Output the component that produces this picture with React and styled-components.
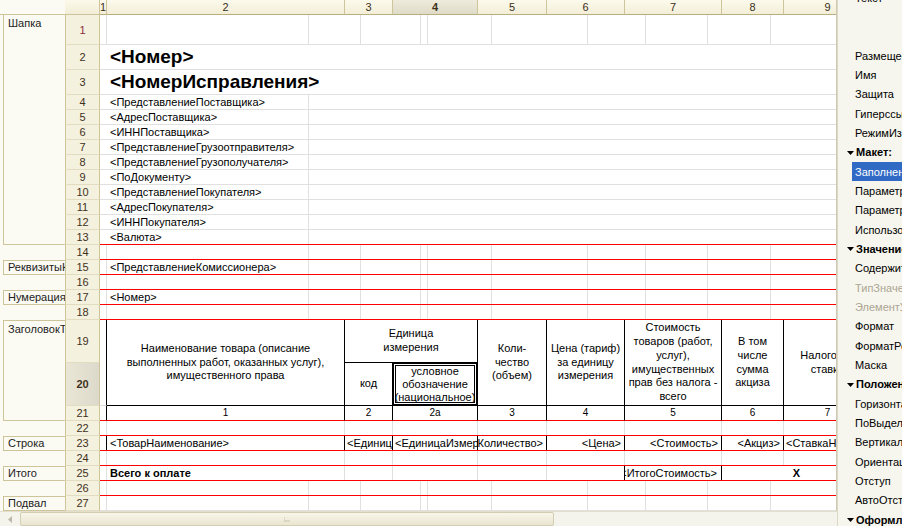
import React from 'react'
import styled, { createGlobalStyle } from 'styled-components'

const GlobalStyle = createGlobalStyle`
  html, body { margin: 0; padding: 0; background: #fff; }
  body { font-family: "Liberation Sans", Arial, sans-serif; font-size: 11px; color: #000; }
  * { box-sizing: border-box; }
`

const FORMAT_A = '7px 202px 52px 60px 7px 64px 96px 58px 62px 63px 80px'
const FORMAT_B = '7px 238px 48px 85px 69px 78px 97px 62px 88px'
const GRID = '#e0e0e0'
const RED = '#ff0000'
const KHAKI = '#cdc499'

const edgeColor = (edge) => (edge === 'black' ? '#000' : edge === 'none' ? 'transparent' : GRID)

const Screen = styled.div`
    width: 902px;
    height: 526px;
    display: flex;
    overflow: hidden;
`
const Workspace = styled.div`
    width: 837px;
    display: grid;
    grid-template-rows: 511px 15px;
`
const Main = styled.div`
    display: flex;
    overflow: hidden;
`
const GroupPanel = styled.div`
    width: 65px;
    flex-shrink: 0;
    display: flex;
    flex-direction: column;
    background: #fcfbf3;
`
const Corner = styled.div`
    height: 15px;
    flex-shrink: 0;
    background: ${p => p.$head ? 'linear-gradient(#fbf9ea, #f1edd6)' : 'transparent'};
    border-bottom: 1px solid ${KHAKI};
    border-right: ${p => p.$head ? `1px solid ${KHAKI}` : 'none'};
`
const GroupBox = styled.div`
    height: ${p => p.$h}px;
    margin-left: 3px;
    border: 1px solid ${KHAKI};
    border-right: none;
    border-top: ${p => p.$first ? 'none' : `1px solid ${KHAKI}`};
    padding: ${p => p.$h > 20 ? '2px 0 0 4px' : '0 0 0 4px'};
    line-height: 13px;
    white-space: nowrap;
    overflow: hidden;
    color: #222;
`
const GroupGap = styled.div`
    height: ${p => p.$h}px;
`
const RowHeads = styled.div`
    width: 35px;
    flex-shrink: 0;
    display: flex;
    flex-direction: column;
`
const RowHead = styled.div`
    height: ${p => p.$h}px;
    flex-shrink: 0;
    display: flex;
    align-items: center;
    justify-content: center;
    background: ${p => p.$selected ? 'linear-gradient(90deg, #e9e6d6, #dedacb)' : '#f4f1df'};
    border-bottom: 1px solid #e2dcc0;
    border-right: 1px solid ${KHAKI};
    border-left: 1px solid ${KHAKI};
    color: ${p => p.$first ? '#8a2d3c' : '#3f321c'};
    font-weight: ${p => p.$selected ? 'bold' : 'normal'};
`
const Sheet = styled.div`
    flex: 1;
    overflow: hidden;
    display: flex;
    flex-direction: column;
    border-right: 1px solid #cfcab4;
`
const ColHeads = styled.div`
    width: 772px;
    height: 15px;
    flex-shrink: 0;
    display: grid;
    grid-template-columns: ${FORMAT_B};
`
const ColHead = styled.div`
    display: flex;
    align-items: center;
    justify-content: center;
    background: ${p => p.$selected ? 'linear-gradient(#eeebdc, #dfdbc8)' : 'linear-gradient(#fcfaec, #f2eed7)'};
    border-right: 1px solid ${KHAKI};
    border-bottom: 1px solid #b9ae80;
    color: #3b3020;
    font-weight: ${p => p.$selected ? 'bold' : 'normal'};
    overflow: hidden;
`
const Row = styled.div`
    width: 772px;
    height: ${p => p.$h}px;
    flex-shrink: 0;
    display: grid;
    grid-template-columns: ${p => p.$cols};
    border-bottom: 1px solid ${p => p.$red ? RED : GRID};
`
const Cell = styled.div`
    grid-column: span ${p => p.$span || 1};
    display: flex;
    align-items: center;
    justify-content: ${p => p.$align === 'right' ? 'flex-end' : p.$align === 'center' ? 'center' : 'flex-start'};
    padding: 0 ${p => p.$pad ?? 3}px;
    border-right: 1px solid ${p => edgeColor(p.$edge)};
    white-space: nowrap;
    overflow: hidden;
    font-size: ${p => p.$size || 11}px;
    font-weight: ${p => p.$bold ? 'bold' : 'normal'};
`
const TableHead = styled.div`
    width: 772px;
    flex-shrink: 0;
    display: grid;
    grid-template-columns: ${FORMAT_B};
    grid-template-rows: 43px 43px 15px;
`
const HeadCell = styled.div`
    grid-column: ${p => p.$col};
    grid-row: ${p => p.$row};
    display: flex;
    align-items: center;
    justify-content: center;
    text-align: center;
    line-height: ${p => p.$current ? 13 : 13.7}px;
    white-space: nowrap;
    overflow: hidden;
    border-right: 1px solid ${p => edgeColor(p.$edge)};
    border-bottom: 1px solid ${p => p.$bottom || '#000'};
    box-shadow: ${p => p.$current ? 'inset 0 0 0 1px #000, inset 0 0 0 2px #fff, inset 0 0 0 3px #000' : 'none'};
    font-size: ${p => p.$size || 11}px;
`
const HScroll = styled.div`
    display: flex;
    background: #f5f4ec;
    border-top: 1px solid #e3dfcc;
`
const ScrollBtn = styled.div`
    width: 20px;
    display: flex;
    align-items: center;
    justify-content: center;
`
const Thumb = styled.div`
    width: 534px;
    display: flex;
    align-items: center;
    justify-content: center;
    border: 1px solid #d3cdb2;
    border-radius: 2px;
    background: linear-gradient(#f8f6ea, #e9e5d0);
`
const PropsPanel = styled.div`
    width: 65px;
    flex-shrink: 0;
    background: #f7f6ee;
    border-left: 1px solid #dcd8c6;
    overflow: hidden;
`
const PropsList = styled.div`
    margin-top: -12px;
`
const PropItem = styled.div`
    height: 19.33px;
    display: flex;
    align-items: center;
    white-space: nowrap;
    overflow: hidden;
    margin-left: ${p => p.$active ? 14 : 0}px;
    padding-left: ${p => p.$active ? 3 : 17}px;
    background: ${p => p.$active ? '#316ac5' : 'transparent'};
    color: ${p => p.$active ? '#fff' : p.$muted ? '#aaa593' : '#000'};
`
const PropGroup = styled.div`
    height: 19.33px;
    display: flex;
    align-items: center;
    gap: 2px;
    padding-left: 9px;
    white-space: nowrap;
    overflow: hidden;
    font-weight: bold;
    svg { flex-shrink: 0; }
`

const ROW_HEIGHTS = [30, 25, 25, ...Array(15).fill(15), 43, 43, ...Array(7).fill(15)]

const GROUPS = [
    { label: 'Шапка', h: 230, first: true },
    { gap: 15 },
    { label: 'РеквизитыКомиссионера', h: 15 },
    { gap: 15 },
    { label: 'НумерацияЛистов', h: 15 },
    { gap: 15 },
    { label: 'ЗаголовокТаблицы', h: 101 },
    { gap: 15 },
    { label: 'Строка', h: 15 },
    { gap: 15 },
    { label: 'Итого', h: 15 },
    { gap: 15 },
    { label: 'Подвал', h: 15 },
]

const HEADER_TEXTS = [
    '<ПредставлениеПоставщика>',
    '<АдресПоставщика>',
    '<ИННПоставщика>',
    '<ПредставлениеГрузоотправителя>',
    '<ПредставлениеГрузополучателя>',
    '<ПоДокументу>',
    '<ПредставлениеПокупателя>',
    '<АдресПокупателя>',
    '<ИННПокупателя>',
    '<Валюта>',
]

const PROPS = [
    { t: 'Текст' }, { t: '' }, { t: '' },
    { t: 'Размещение' }, { t: 'Имя' }, { t: 'Защита' }, { t: 'Гиперссылка' }, { t: 'РежимИзменения' },
    { g: 'Макет:' },
    { t: 'Заполнение', active: true }, { t: 'Параметр' }, { t: 'ПараметрРасшифровки' }, { t: 'Использование' },
    { g: 'Значение:' },
    { t: 'Содержит значение' }, { t: 'ТипЗначения', muted: true }, { t: 'ЭлементУправления', muted: true },
    { t: 'Формат' }, { t: 'ФорматРедактирования' }, { t: 'Маска' },
    { g: 'Положение:' },
    { t: 'Горизонтальное положение' }, { t: 'ПоВыделенным' }, { t: 'Вертикальное положение' },
    { t: 'Ориентация текста' }, { t: 'Отступ' }, { t: 'АвтоОтступ' },
    { g: 'Оформление:' },
]

const GridRow = ({ h = 15, red, text }) => (
    <Row $h={h} $cols={FORMAT_A} $red={red}>
        <Cell />
        <Cell>{text}</Cell>
        {Array.from({ length: 9 }, (_, i) => <Cell key={i} />)}
    </Row>
)

const TextRow = ({ text, red }) => (
    <Row $h={15} $cols={FORMAT_A} $red={red}>
        <Cell $edge="none" />
        <Cell>{text}</Cell>
        <Cell $span={9} $edge="none" />
    </Row>
)

const TitleRow = ({ text }) => (
    <Row $h={25} $cols={FORMAT_A}>
        <Cell $edge="none" />
        <Cell $span={10} $edge="none" $bold $size={19}>{text}</Cell>
    </Row>
)

const Arrow = ({ dir = 'down', color = '#000' }) => (
    <svg width="7" height="7" viewBox="0 0 7 7">
        {dir === 'down'
            ? <path d="M0 2h7L3.5 6z" fill={color} />
            : <path d="M5 0v7L1 3.5z" fill={color} />}
    </svg>
)

export default function App() {
    return (
        <Screen>
            <GlobalStyle />
            <Workspace>
                <Main>
                    <GroupPanel>
                        <Corner />
                        {GROUPS.map((g, i) => g.gap
                            ? <GroupGap key={i} $h={g.gap} />
                            : <GroupBox key={i} $h={g.h} $first={g.first}>{g.label}</GroupBox>)}
                    </GroupPanel>
                    <RowHeads>
                        <Corner $head />
                        {ROW_HEIGHTS.map((h, i) => (
                            <RowHead key={i} $h={h} $first={i === 0} $selected={i === 19}>{i + 1}</RowHead>
                        ))}
                    </RowHeads>
                    <Sheet>
                        <ColHeads>
                            {[1, 2, 3, 4, 5, 6, 7, 8, 9].map(n => (
                                <ColHead key={n} $selected={n === 4}>{n}</ColHead>
                            ))}
                        </ColHeads>
                        <GridRow h={30} />
                        <TitleRow text="<Номер>" />
                        <TitleRow text="<НомерИсправления>" />
                        {HEADER_TEXTS.map((t, i) => (
                            <TextRow key={t} text={t} red={i === HEADER_TEXTS.length - 1} />
                        ))}
                        <GridRow red />
                        <GridRow red text="<ПредставлениеКомиссионера>" />
                        <GridRow red />
                        <GridRow red text="<Номер>" />
                        <GridRow red />

                        <TableHead>
                            <HeadCell $col="1" $row="1 / span 2" $edge="black" $bottom={GRID} />
                            <HeadCell $col="2" $row="1 / span 2" $edge="black">
                                Наименование товара (описание<br />выполненных работ, оказанных услуг),<br />имущественного права
                            </HeadCell>
                            <HeadCell $col="3 / span 2" $row="1" $edge="black">Единица<br />измерения</HeadCell>
                            <HeadCell $col="3" $row="2" $edge="black">код</HeadCell>
                            <HeadCell $col="4" $row="2" $edge="black" $current>условное<br />обозначение<br />(национальное)</HeadCell>
                            <HeadCell $col="5" $row="1 / span 2" $edge="black">Коли-<br />чество<br />(объем)</HeadCell>
                            <HeadCell $col="6" $row="1 / span 2" $edge="black">Цена (тариф)<br />за единицу<br />измерения</HeadCell>
                            <HeadCell $col="7" $row="1 / span 2" $edge="black">
                                Стоимость<br />товаров (работ,<br />услуг),<br />имущественных<br />прав без налога -<br />всего
                            </HeadCell>
                            <HeadCell $col="8" $row="1 / span 2" $edge="black">В том<br />числе<br />сумма<br />акциза</HeadCell>
                            <HeadCell $col="9" $row="1 / span 2" $edge="black">Налоговая<br />ставка</HeadCell>
                            {['', '1', '2', '2а', '3', '4', '5', '6', '7'].map((n, i) => (
                                <HeadCell key={i} $col={String(i + 1)} $row="3" $edge="black" $bottom={RED} $size={10}>{n}</HeadCell>
                            ))}
                        </TableHead>

                        <Row $h={15} $cols={FORMAT_B} $red>
                            {Array.from({ length: 9 }, (_, i) => <Cell key={i} />)}
                        </Row>
                        <Row $h={15} $cols={FORMAT_B} $red>
                            <Cell $edge="black" />
                            <Cell $edge="black">{'<ТоварНаименование>'}</Cell>
                            <Cell $edge="black" $pad={2}>{'<ЕдиницаИзмеренияКод>'}</Cell>
                            <Cell $edge="black" $pad={2}>{'<ЕдиницаИзмерения>'}</Cell>
                            <Cell $edge="black" $align="right">{'<Количество>'}</Cell>
                            <Cell $edge="black" $align="right">{'<Цена>'}</Cell>
                            <Cell $edge="black" $align="right">{'<Стоимость>'}</Cell>
                            <Cell $edge="black" $align="right">{'<Акциз>'}</Cell>
                            <Cell $pad={2}>{'<СтавкаНДС>'}</Cell>
                        </Row>
                        <Row $h={15} $cols={FORMAT_B} $red>
                            {Array.from({ length: 9 }, (_, i) => <Cell key={i} />)}
                        </Row>
                        <Row $h={15} $cols={FORMAT_B} $red>
                            <Cell />
                            <Cell $bold>Всего к оплате</Cell>
                            <Cell />
                            <Cell />
                            <Cell />
                            <Cell $edge="black" />
                            <Cell $edge="black" $align="right" $pad={4}>{'<ИтогоСтоимость>'}</Cell>
                            <Cell $span={2} $align="center" $bold>X</Cell>
                        </Row>
                        <GridRow red />
                        <GridRow />
                    </Sheet>
                </Main>
                <HScroll>
                    <ScrollBtn><Arrow dir="left" color="#bdb9a8" /></ScrollBtn>
                    <Thumb>
                        <svg width="6" height="6" viewBox="0 0 6 6">
                            <path d="M0 5h6M0 1v4" stroke="#c9c4ad" strokeWidth="1" />
                        </svg>
                    </Thumb>
                </HScroll>
            </Workspace>
            <PropsPanel>
                <PropsList>
                    {PROPS.map((p, i) => p.g
                        ? <PropGroup key={i}><Arrow />{p.g}</PropGroup>
                        : <PropItem key={i} $active={p.active} $muted={p.muted}>{p.t}</PropItem>)}
                </PropsList>
            </PropsPanel>
        </Screen>
    )
}
